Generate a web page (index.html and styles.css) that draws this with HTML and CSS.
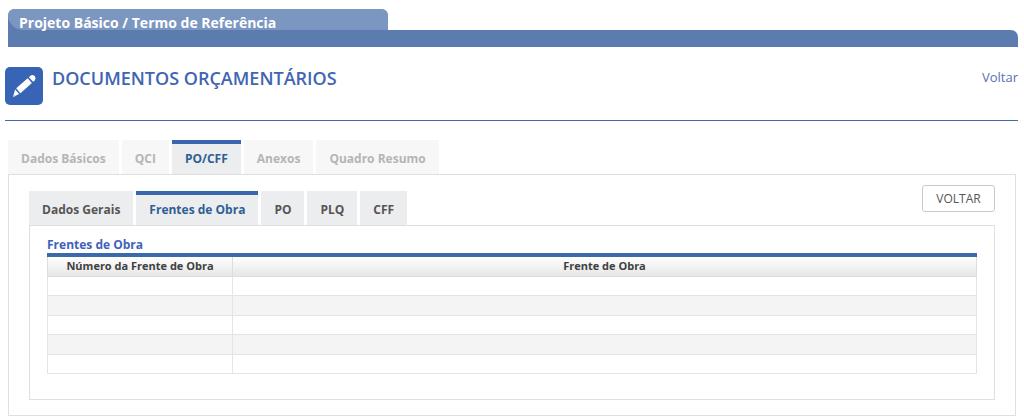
FILE: index.html
```html
<!DOCTYPE html>
<html lang="pt-BR">
<head>
<meta charset="utf-8">
<title>Documentos Orçamentários</title>
<link rel="stylesheet" href="styles.css">
</head>
<body>
<header class="banner">
  <div class="banner-tab"><span class="banner-title">Projeto Básico / Termo de Referência</span></div>
  <div class="banner-bar"></div>
</header>
<main>
  <div class="page-head">
    <svg class="page-icon" viewBox="0 0 38 38" aria-hidden="true">
      <rect width="38" height="38" rx="5" fill="#3864b5"/>
      <g fill="#fff">
        <path d="M11.2 21.2 22.7 11.2 26.9 15.9 15.4 26.2Z"/>
        <path d="M23.9 10.2 25.6 8.6Q27.6 7 29.6 9L30 9.5Q31.3 11.3 29.8 13.2L28.1 14.8Z"/>
        <path d="M10.1 22.4 14.2 27.1 8 30Z"/>
      </g>
      <path d="M8 30 8.7 27.4 10.5 28.9Z" fill="#b5c5e5"/>
    </svg>
    <h1 class="page-title">DOCUMENTOS ORÇAMENTÁRIOS</h1>
    <a class="back-link" href="#">Voltar</a>
  </div>
  <nav class="tabs tabs-main">
    <button class="tab" disabled>Dados Básicos</button>
    <button class="tab" disabled>QCI</button>
    <button class="tab tab-active">PO/CFF</button>
    <button class="tab" disabled>Anexos</button>
    <button class="tab" disabled>Quadro Resumo</button>
  </nav>
  <section class="panel panel-main">
    <div class="toolbar">
      <nav class="tabs">
        <button class="tab">Dados Gerais</button>
        <button class="tab tab-active">Frentes de Obra</button>
        <button class="tab">PO</button>
        <button class="tab">PLQ</button>
        <button class="tab">CFF</button>
      </nav>
      <button class="back-button">VOLTAR</button>
    </div>
    <div class="panel panel-inner">
      <table class="grid">
        <caption>Frentes de Obra</caption>
        <thead>
          <tr><th class="col-number" scope="col">Número da Frente de Obra</th><th scope="col">Frente de Obra</th></tr>
        </thead>
        <tbody>
          <tr><td></td><td></td></tr>
          <tr><td></td><td></td></tr>
          <tr><td></td><td></td></tr>
          <tr><td></td><td></td></tr>
          <tr><td></td><td></td></tr>
        </tbody>
      </table>
    </div>
  </section>
</main>
</body>
</html>
```

FILE: styles.css
```css
* {
  box-sizing: border-box;
}

body {
  margin: 0;
  padding: 9px 6px 0 5px;
  background: #fff;
  color: #4a4a4a;
  font-family: "Open Sans", "Noto Sans", sans-serif;
  font-size: 12px;
}

button {
  font-family: inherit;
}

.banner {
  padding-left: 3px;
}

.banner-tab {
  width: 380px;
  max-width: 100%;
  background: #5c7cb0;
  border-radius: 8px 8px 0 0;
}

.banner-title {
  display: block;
  height: 21px;
  padding: 4px 11px 0;
  background: #7b96c0;
  border-radius: 8px 8px 0 20px;
  color: #fff;
  font-size: 14px;
  font-weight: 700;
  line-height: 20px;
  white-space: nowrap;
}

.banner-bar {
  height: 17px;
  background: #5c7cb0;
  border-radius: 0 7px 0 0;
}

.page-head {
  display: flex;
  align-items: flex-start;
  gap: 9px;
  margin-top: 20px;
  padding-bottom: 15px;
  border-bottom: 1px solid #4468b0;
}

.page-icon {
  flex: none;
  width: 38px;
  height: 38px;
}

.page-title {
  flex: 1;
  margin: 0;
  color: #4065b2;
  font-size: 18px;
  font-weight: 600;
  line-height: 22px;
}

.back-link {
  color: #5871b1;
  font-size: 13px;
  line-height: 20px;
  text-decoration: none;
}

.tabs {
  display: flex;
  align-items: flex-end;
  gap: 3px;
}

.tabs-main {
  margin: 19px 0 0 3px;
}

.tab {
  height: 34px;
  padding: 0 13px;
  border: 0;
  border-top: 4px solid #ecedef;
  background: #ecedef;
  color: #555;
  font-size: 12px;
  font-weight: 700;
  line-height: 30px;
  white-space: nowrap;
}

.tab:disabled {
  border-color: #f7f7f7;
  background: #f7f7f7;
  color: #b5b5b5;
}

.tab-active {
  border-top-color: #3a66ad;
  color: #2f5f93;
}

.panel {
  border: 1px solid #dfdfdf;
}

.panel-main {
  margin: 0 2px 0 3px;
  padding: 10px 20px 15px;
}

.toolbar {
  display: flex;
  justify-content: space-between;
  align-items: flex-start;
}

.toolbar .tabs {
  padding-top: 6px;
}

.back-button {
  width: 73px;
  height: 27px;
  padding: 0;
  border: 1px solid #c9c9c9;
  border-radius: 3px;
  background: #fff;
  color: #555;
  font-size: 12px;
}

.panel-inner {
  padding: 10px 17px 25px;
}

.grid {
  width: 100%;
  border-collapse: separate;
  border-spacing: 0;
  table-layout: fixed;
}

.grid caption {
  height: 21px;
  border-bottom: 4px solid #3a69ac;
  color: #3e62bd;
  font-size: 12px;
  font-weight: 700;
  line-height: 18px;
  text-align: left;
}

.grid th {
  height: 20px;
  padding: 0 0 1px;
  border: 0 solid #dedede;
  border-width: 0 1px 1px 0;
  background: linear-gradient(#fff, #e6e6e6);
  color: #404040;
  font-size: 11px;
  font-weight: 700;
  line-height: 18px;
}

.grid .col-number {
  width: 20%;
}

.grid td {
  height: 19px;
  padding: 0;
  border: 0 solid #e4e4e4;
  border-width: 0 1px 1px 0;
}

.grid th:first-child,
.grid td:first-child {
  border-left-width: 1px;
}

.grid tbody tr:nth-child(even) td {
  height: 20px;
  background: #f4f4f4;
}
```
